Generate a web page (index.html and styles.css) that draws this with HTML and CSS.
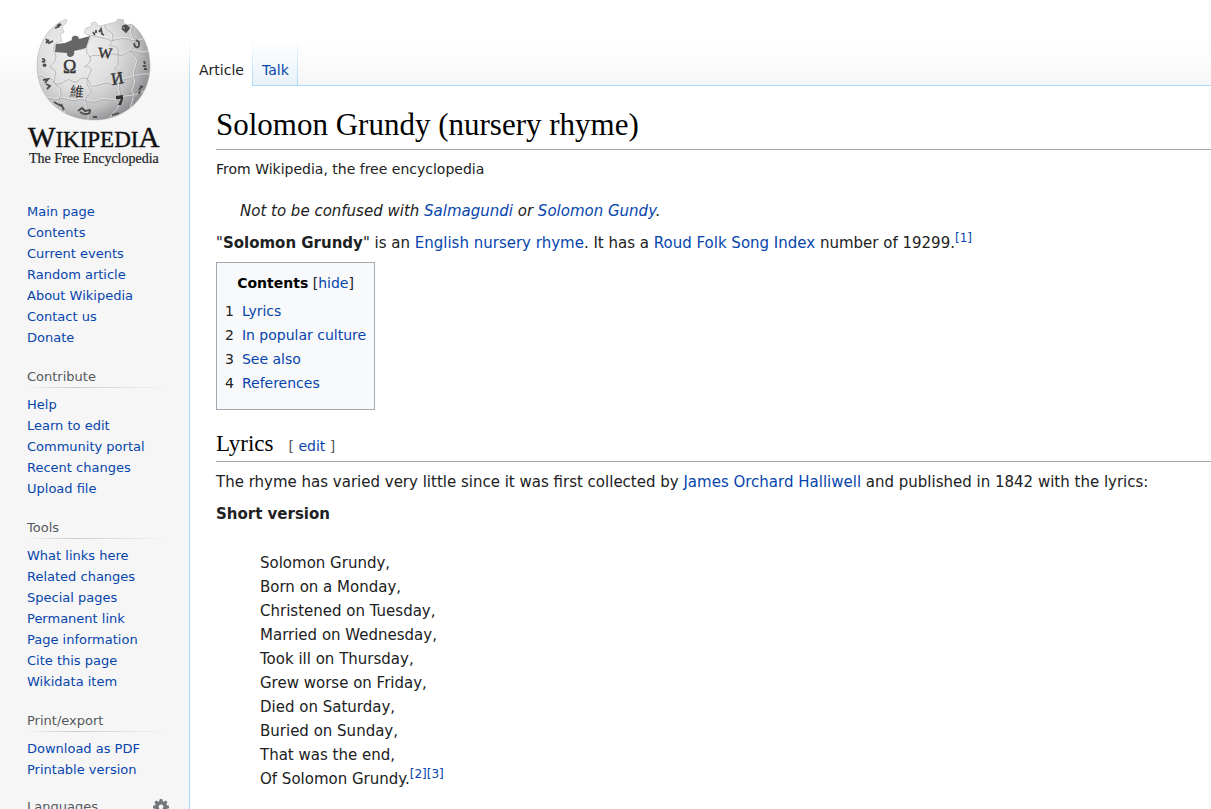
FILE: index.html
```html
<!DOCTYPE html>
<html lang="en">
<head>
<meta charset="utf-8">
<title>Solomon Grundy (nursery rhyme) - Wikipedia</title>
<link rel="stylesheet" href="styles.css">
</head>
<body>
<div class="page">
  <aside class="sidebar">
    <a class="logo" href="#" aria-label="Visit the main page">
      <svg class="logo-art" viewBox="0 0 164 172" width="164" height="172" role="img" aria-label="Wikipedia, The Free Encyclopedia">
        <defs>
          <radialGradient id="ball" gradientUnits="userSpaceOnUse" cx="78" cy="50" r="82">
            <stop offset="0" stop-color="#f0f0f0"/>
            <stop offset=".45" stop-color="#e0e0e1"/>
            <stop offset=".72" stop-color="#c2c2c4"/>
            <stop offset="1" stop-color="#808084"/>
          </radialGradient>
          <clipPath id="globe-clip"><path d="M66 19L60 22C46 30 37 47 37 66C37 98 62 120 94 120C126 120 150 97 150 66C150 48 143 34 134 26L131 24L127 25L123 23L124 20L118 19L116 22L100 26L97 25C98 22 92 21 91 24C92 27 89 27 86 28L84 33L91 36L86 49L56 52V43L62 41L60 35L64 32L62 27L67 22Z"/></clipPath>
        </defs>
        <path d="M66 19L60 22C46 30 37 47 37 66C37 98 62 120 94 120C126 120 150 97 150 66C150 48 143 34 134 26L131 24L127 25L123 23L124 20L118 19L116 22L100 26L97 25C98 22 92 21 91 24C92 27 89 27 86 28L84 33L91 36L86 49L56 52V43L62 41L60 35L64 32L62 27L67 22Z" fill="url(#ball)" stroke="#aaa" stroke-width=".5"/>
        <path d="M56 44L65 43L72 40C70 35 79 34 79 39L90 36L86 48L74 51C76 58 66 59 67 53L55 52Z" fill="#666"/>
        <g clip-path="url(#globe-clip)">
          <g class="seam-light">
            <path d="M37 76C44 72 44 80 49 78C55 76 51 84 58 83S67 76 72 80 79 76 85 77C93 79 86 86 94 85S105 80 111 83 119 79 126 78 139 73 150 74"/>
            <path d="M86 49C83 56 92 54 89 61S79 66 87 67 84 77 86 84 94 91 87 95 90 108 88 120"/>
            <path d="M54 44C50 53 57 53 54 60S45 66 52 69 49 81 55 85 61 93 58 99 66 107 67 118"/>
            <path d="M104 24C103 33 112 29 112 37S104 46 112 46 116 57 117 62 109 68 117 71 116 83 119 91 110 99 117 102 111 113 109 120"/>
            <path d="M41 99C50 94 54 101 59 98S72 102 77 99 91 104 98 100 111 102 119 98 131 98 144 91"/>
            <path d="M89 56C98 51 102 58 109 54S120 58 126 52 139 55 149 51M85 33L108 38C112 42 119 36 127 38S136 42 145 38"/>
            <path d="M132 25C127 37 137 37 133 45S127 51 134 56 131 69 134 78 128 89 134 94L130 109"/>
          </g>
          <g class="seam-dark">
            <path d="M37 77C44 73 44 81 49 79C55 77 51 85 58 84S67 77 72 81 79 77 85 78C93 80 86 87 94 86S105 81 111 84 119 80 126 79 139 74 150 75"/>
            <path d="M87 49C84 56 93 54 90 61S80 66 88 67 85 77 87 84 95 91 88 95 91 108 89 120"/>
            <path d="M55 44C51 53 58 53 55 60S46 66 53 69 50 81 56 85 62 93 59 99 67 107 68 118"/>
            <path d="M105 24C104 33 113 29 113 37S105 46 113 46 117 57 118 62 110 68 118 71 117 83 120 91 111 99 118 102 112 113 110 120"/>
            <path d="M41 100C50 95 54 102 59 99S72 103 77 100 91 105 98 101 111 103 119 99 131 99 144 92"/>
            <path d="M89 57C98 52 102 59 109 55S120 59 126 53 139 56 149 52M85 34L108 39C112 43 119 37 127 39S136 43 145 39"/>
            <path d="M133 25C128 37 138 37 134 45S128 51 135 56 132 69 135 78 129 89 135 94L131 109"/>
          </g>
          <g class="small-glyphs">
            <path d="M57 26L60 24M55 28L58 27L61 24M46 39L49 43L53 41M46 43L49 40M93 32L95 35M96 30V33M99 32L101 29L102 34L104 35M122 27L126 25L129 28L126 32L122 28M124 26L128 30M126 26L125 31"/>
            <path d="M134 43C135 49 140 49 139 42L136 40M42 59C46 58 45 64 42 61M43 65C47 63 46 68 43 65M144 61L145 64M143 66H146M144 69H147M43 80L48 79L45 83M46 84L50 86L47 89M54 102L63 107M61 104L64 110M78 111L82 108L85 111L90 110C91 115 84 115 80 112M93 117H97M112 115L119 113M139 90L142 86M140 86L143 87M139 94L140 91"/>
          </g>
        </g>
        <g class="globe-letters">
          <text x="63" y="73" font-size="18">Ω</text>
          <text x="98" y="58" font-size="15" transform="rotate(4 105 53)">W</text>
          <text x="111" y="84" font-size="17" transform="rotate(-10 117 78)">И</text>
          <text class="globe-han" x="70" y="97" font-size="14" transform="rotate(5 77 92)">維</text>
          <path d="M116 96L123 95V99L121 105H118L121 99H116Z"/>
        </g>
        <text class="wordmark" x="28" y="147"><tspan class="big">W</tspan>IKIPEDI<tspan class="big">A</tspan></text>
        <text class="tagline" x="29" y="163">The Free Encyclopedia</text>
      </svg>
    </a>
    <nav class="portal portal-first" aria-label="Navigation">
      <ul>
        <li><a href="#">Main page</a></li><li><a href="#">Contents</a></li><li><a href="#">Current events</a></li><li><a href="#">Random article</a></li><li><a href="#">About Wikipedia</a></li><li><a href="#">Contact us</a></li><li><a href="#">Donate</a></li>
      </ul>
    </nav>
    <nav class="portal" aria-labelledby="contribute">
      <h3 id="contribute">Contribute</h3>
      <ul>
        <li><a href="#">Help</a></li><li><a href="#">Learn to edit</a></li><li><a href="#">Community portal</a></li><li><a href="#">Recent changes</a></li><li><a href="#">Upload file</a></li>
      </ul>
    </nav>
    <nav class="portal" aria-labelledby="tools">
      <h3 id="tools">Tools</h3>
      <ul>
        <li><a href="#">What links here</a></li><li><a href="#">Related changes</a></li><li><a href="#">Special pages</a></li><li><a href="#">Permanent link</a></li><li><a href="#">Page information</a></li><li><a href="#">Cite this page</a></li><li><a href="#">Wikidata item</a></li>
      </ul>
    </nav>
    <nav class="portal" aria-labelledby="print">
      <h3 id="print">Print/export</h3>
      <ul>
        <li><a href="#">Download as PDF</a></li><li><a href="#">Printable version</a></li>
      </ul>
    </nav>
    <div class="languages">
      <h3>Languages</h3>
      <button class="settings" type="button" aria-label="Language settings">
        <svg viewBox="0 0 20 20" width="16" height="16">
          <g fill="#72777d">
            <path fill-rule="evenodd" d="M10 2.500a7.500 7.500 0 1 0 0 15 7.500 7.500 0 0 0 0-15zm0 4.500a3 3 0 1 1 0 6 3 3 0 0 1 0-6z"/>
            <path id="tooth" d="M7.500 3.500L8.500 0h3l1 3.500z"/>
            <use href="#tooth" transform="rotate(45 10 10)"/><use href="#tooth" transform="rotate(90 10 10)"/><use href="#tooth" transform="rotate(135 10 10)"/><use href="#tooth" transform="rotate(180 10 10)"/><use href="#tooth" transform="rotate(225 10 10)"/><use href="#tooth" transform="rotate(270 10 10)"/><use href="#tooth" transform="rotate(315 10 10)"/>
          </g>
        </svg>
      </button>
    </div>
  </aside>
  <div class="main">
    <nav class="tabs" aria-label="Namespaces">
      <a class="tab tab-selected" href="#">Article</a>
      <a class="tab" href="#">Talk</a>
    </nav>
    <main class="content">
      <h1>Solomon Grundy (nursery rhyme)</h1>
      <p class="site-sub">From Wikipedia, the free encyclopedia</p>
      <p class="hatnote">Not to be confused with <a href="#">Salmagundi</a> or <a href="#">Solomon Gundy</a>.</p>
      <p class="intro">"<b>Solomon Grundy</b>" is an <a href="#">English nursery rhyme</a>. It has a <a href="#">Roud Folk Song Index</a> number of 19299.<sup><a href="#">[1]</a></sup></p>
      <nav class="toc" aria-labelledby="toc-title">
        <div class="toc-head"><h2 id="toc-title">Contents</h2> <span>[<button type="button">hide</button>]</span></div>
        <ol>
          <li><span>1</span><a href="#lyrics">Lyrics</a></li>
          <li><span>2</span><a href="#">In popular culture</a></li>
          <li><span>3</span><a href="#">See also</a></li>
          <li><span>4</span><a href="#">References</a></li>
        </ol>
      </nav>
      <div class="section-head"><h2 id="lyrics">Lyrics</h2><span class="edit">[ <a href="#">edit</a> ]</span></div>
      <p>The rhyme has varied very little since it was first collected by <a href="#">James Orchard Halliwell</a> and published in 1842 with the lyrics:</p>
      <p><b>Short version</b></p>
      <blockquote class="poem">Solomon Grundy,<br>Born on a Monday,<br>Christened on Tuesday,<br>Married on Wednesday,<br>Took ill on Thursday,<br>Grew worse on Friday,<br>Died on Saturday,<br>Buried on Sunday,<br>That was the end,<br>Of Solomon Grundy.<sup><a href="#">[2]</a><a href="#">[3]</a></sup></blockquote>
    </main>
  </div>
</div>
</body>
</html>
```

FILE: styles.css
```css
* { box-sizing: border-box; }

body {
  margin: 0;
  background: #f6f6f6;
  color: #202122;
  font-family: "DejaVu Sans", sans-serif;
  font-size: 15px;
  line-height: 24px;
}

a { color: #0645ad; text-decoration: none; }
a:hover { text-decoration: underline; }
h1, h2, h3, p, ul, ol, blockquote { margin: 0; padding: 0; font-weight: normal; }
ul, ol { list-style: none; }
button { padding: 0; border: 0; background: none; font: inherit; cursor: pointer; }

.page {
  display: grid;
  grid-template-columns: 189px 1fr;
  min-height: 100vh;
  background: linear-gradient(#fff 0, #fff 43px, #f6f6f6 85px);
}

/* Sidebar */
.sidebar { font-size: 13px; line-height: 21px; }
.logo { display: block; height: 201px; }
.logo-art { display: block; }
.seam-light { fill: none; stroke: #f4f4f4; stroke-width: 1; opacity: .7; }
.seam-dark { fill: none; stroke: #a4a4a6; stroke-width: .7; }
.small-glyphs { fill: none; stroke: #4c4c4c; stroke-width: 1.8; }
.globe-letters { fill: #333; font-family: "Liberation Serif", serif; }
.globe-letters text { stroke: #333; stroke-width: .4; }
.globe-letters .globe-han { font-family: "Noto Sans CJK TC", sans-serif; stroke: none; }
.wordmark { font-family: "Liberation Serif", serif; font-size: 23px; fill: #111; stroke: #111; stroke-width: .4; }
.wordmark .big { font-size: 29px; }
.tagline { font-family: "Liberation Serif", serif; font-size: 14px; fill: #222; stroke: #222; stroke-width: .2; }

.portal { padding: 0 20px 18px 27px; }
.portal h3 {
  margin-bottom: 6px;
  color: #54595d;
  font-size: 13px;
  line-height: 21px;
  border-bottom: 1px solid;
  border-image: linear-gradient(90deg, #c8ccd100, #c8ccd1 33%, #c8ccd100) 1;
}
.languages {
  display: flex;
  align-items: center;
  justify-content: space-between;
  margin-top: -2px;
  padding: 0 20px 16px 27px;
}
.languages h3 { color: #54595d; font-size: 13px; line-height: 21px; }
.settings { display: flex; }

/* Main column */
.main { display: flex; flex-direction: column; min-width: 0; }
.tabs {
  display: flex;
  align-items: flex-end;
  height: 86px;
  border-bottom: 1px solid #a7d7f9;
}
.tab {
  height: 45px;
  padding: 18px 8px 0 9px;
  border-right: 1px solid;
  border-image: linear-gradient(#a7d7f900, #a7d7f9) 1;
  background: linear-gradient(#fff, #e8f2f8);
  font-size: 14px;
  line-height: 24px;
}
.tab-selected {
  height: 46px;
  margin-bottom: -1px;
  border-left: 1px solid;
  background: #fff;
  color: #202122;
}
.content {
  flex: 1;
  padding: 18px 0 16px 26px;
  border-left: 1px solid #a7d7f9;
  background: #fff;
}
.content p { margin: 8px 0; }
.content h1, .section-head h2 { color: #000; font-family: "Liberation Serif", serif; }
.content h1 {
  padding-bottom: 3px;
  border-bottom: 1px solid #a2a9b1;
  font-size: 31px;
  line-height: 42px;
}
.content .site-sub { margin-top: 7px; font-size: 14px; }
.content .hatnote { margin-top: 18px; padding-left: 24px; font-style: italic; }
.content .intro { margin-bottom: 7px; }
sup { font-size: 12px; line-height: 0; }

.toc {
  width: fit-content;
  padding: 8px 8px 14px;
  border: 1px solid #a2a9b1;
  background: #f8f9fa;
  font-size: 14px;
}
.toc-head { text-align: center; }
.toc-head h2 { display: inline; color: #000; font-size: 14px; font-weight: bold; }
.toc button { color: #0645ad; }
.toc ol { margin-top: 4px; }
.toc li { display: flex; gap: 8px; }

.section-head {
  display: flex;
  align-items: baseline;
  gap: 15px;
  margin-top: 19px;
  padding-bottom: 2px;
  border-bottom: 1px solid #a2a9b1;
}
.section-head h2 { font-size: 23px; line-height: 30px; }
.edit { color: #54595d; font-size: 14px; }
.poem { margin: 25px 44px; }
```
